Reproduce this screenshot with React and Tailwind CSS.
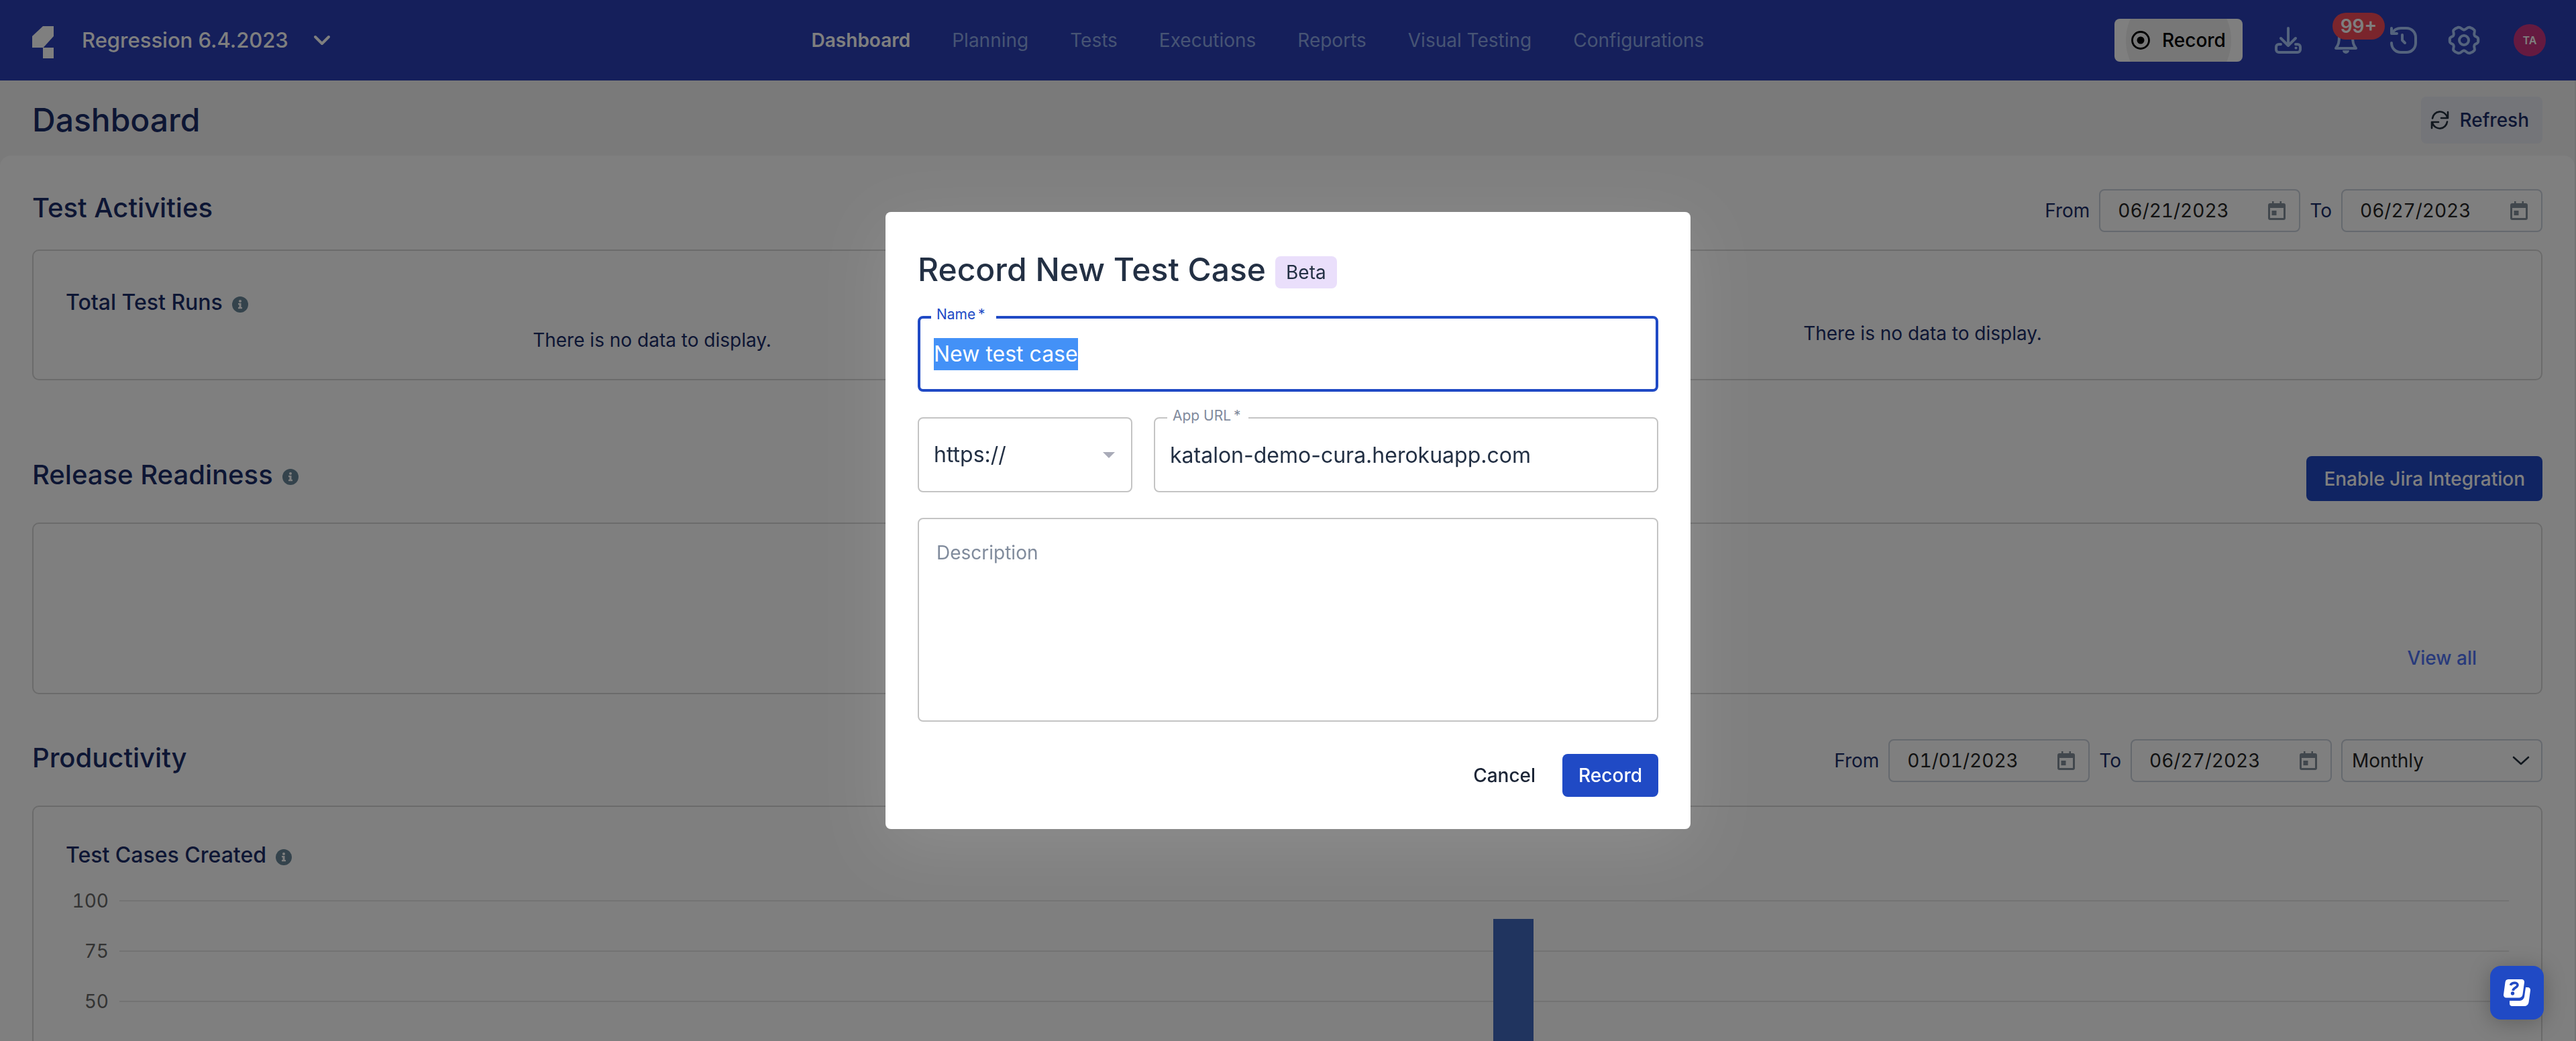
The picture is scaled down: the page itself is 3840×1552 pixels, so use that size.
import { useEffect, useRef } from "react";

const navItems = ["Planning", "Tests", "Executions", "Reports", "Visual Testing", "Configurations"];
const axisTicks = [100, 75, 50, 25, 0];
const bars = [{ label: "May 2023", value: 91, left: 57.5 }];

function InfoIcon() {
  return (
    <svg className="mt-1.5 size-6 shrink-0" viewBox="0 0 24 24" aria-hidden="true">
      <circle cx="12" cy="12" r="12" fill="#688699" />
      <circle cx="12" cy="7" r="2" fill="#fff" />
      <path d="M9 10h4.500v6H15v2.200H9V16h1.500v-3.800H9z" fill="#fff" />
    </svg>
  );
}

function CalendarIcon() {
  return (
    <svg className="h-7 w-[26px]" viewBox="0 0 26 28" aria-hidden="true">
      <path
        d="M6 0h2.500v3h9V0H20v3h3a3 3 0 0 1 3 3v19a3 3 0 0 1-3 3H3a3 3 0 0 1-3-3V6a3 3 0 0 1 3-3h3zM3 10v15h20V10z"
        fill="#828e9b"
        fillRule="evenodd"
      />
      <rect x="5.500" y="14" width="7" height="7" fill="#828e9b" />
    </svg>
  );
}

function DateField({ id, label, value }) {
  return (
    <div className="flex items-center gap-3.5">
      <label htmlFor={id} className="text-[28px] text-[#1a2c68]">
        {label}
      </label>
      <div className="flex h-16 w-[300px] items-center justify-between rounded-lg border-2 border-[#cbd2dc] pr-5 pl-[26px]">
        <input
          id={id}
          defaultValue={value}
          className="w-[200px] bg-transparent text-[28px] text-[#242424] tabular-nums outline-none"
        />
        <button type="button" aria-label={"Choose date, " + value}>
          <CalendarIcon />
        </button>
      </div>
    </div>
  );
}

function SectionTitle({ children, info }) {
  return (
    <h2 className="flex items-center gap-3.5 text-[40px] leading-14 font-medium text-[#1a2c68]">
      {children}
      {info && <InfoIcon />}
    </h2>
  );
}

function PanelTitle({ children }) {
  return (
    <h3 className="flex items-center gap-3.5 text-[32px] leading-10 font-medium text-[#1a2c68]">
      {children}
      <InfoIcon />
    </h3>
  );
}

function GearIcon() {
  const d = "M23 6.500C26.500 6.500 27.500 2 31.500 2.700C34.500 3.500 37 5 38.600 7C40 9.500 37 12 38.600 14.800C40 17.500 44 16.500 44.200 20V22";
  return (
    <svg className="h-11 w-12" viewBox="-1 0 48 44" fill="none" stroke="currentColor" strokeWidth="4" strokeLinecap="round" aria-hidden="true">
      <path d={d} />
      <path d={d} transform="matrix(-1 0 0 1 46 0)" />
      <path d={d} transform="matrix(1 0 0 -1 0 44)" />
      <path d={d} transform="matrix(-1 0 0 -1 46 44)" />
      <circle cx="23" cy="22" r="7" />
    </svg>
  );
}

function Header() {
  return (
    <header className="flex h-[120px] shrink-0 items-center justify-between bg-[#2a3eb6] pr-[45px] pl-12">
      <div className="flex items-center pr-[104px]">
        <svg className="mt-1.5 h-12 w-8" viewBox="0 0 32 48" fill="#fff" aria-label="Katalon" role="img">
          <path d="M16 0h16v15L16.500 32H0V15z" />
          <path d="M16 32h16v16H16z" />
        </svg>
        <button type="button" className="ml-[42px] flex items-center gap-9 text-[31px] font-medium text-white">
          Regression 6.4.2023
          <svg className="h-[18px] w-7" viewBox="0 0 28 18" fill="none" stroke="currentColor" strokeWidth="4" strokeLinecap="round" strokeLinejoin="round" aria-hidden="true">
            <path d="M4 4l10 10L24 4" />
          </svg>
        </button>
      </div>
      <nav className="flex items-center gap-[62px] text-[28px] text-[#8ea9e8]">
        <a href="#dashboard" className="font-semibold text-white">
          Dashboard
        </a>
        {navItems.map((item) => (
          <a key={item} href={"#" + item}>
            {item}
          </a>
        ))}
      </nav>
      <div className="flex items-center gap-[46px] text-[#a9c6fb]">
        <button type="button" className="mr-0.5 flex h-16 w-[191px] items-center justify-center overflow-hidden rounded-lg bg-[radial-gradient(circle_at_center,#efefef_78px,#ffffff_79px)] text-[28px] font-medium text-black">
          <svg className="mr-[18px] size-7" viewBox="0 0 28 28" aria-hidden="true">
            <circle cx="14" cy="14" r="12.500" fill="none" stroke="currentColor" strokeWidth="2.800" />
            <circle cx="14" cy="14" r="5.500" fill="currentColor" />
          </svg>
          Record
        </button>
        <button type="button" aria-label="Downloads">
          <svg className="size-10" viewBox="0 0 40 40" fill="none" stroke="currentColor" strokeWidth="4" strokeLinecap="round" strokeLinejoin="round" aria-hidden="true">
            <path d="M20 2v25M9 17l11 11 11-11" />
            <path d="M9 26H6a4 4 0 0 0-4 4v4a4 4 0 0 0 4 4h28a4 4 0 0 0 4-4v-4a4 4 0 0 0-4-4h-3" />
            <circle cx="31.500" cy="31.500" r="2" fill="currentColor" stroke="none" />
          </svg>
        </button>
        <button type="button" aria-label="Notifications, 99+" className="relative">
          <svg className="size-10" viewBox="0 0 40 40" fill="none" stroke="currentColor" strokeWidth="4" strokeLinejoin="round" aria-hidden="true">
            <path d="M20 4a10 10 0 0 0-10 10c0 9-1 13-5 18h30c-4-5-5-9-5-18A10 10 0 0 0 20 4z" />
            <path d="M15 35h10a5 5 0 0 1-10 0z" fill="currentColor" stroke="none" />
          </svg>
          <span className="absolute -top-[21px] left-0 flex h-10 w-[78px] items-center justify-center rounded-full bg-[#f44a58] text-[28px] font-semibold text-white">
            99+
          </span>
        </button>
        <button type="button" aria-label="History">
          <svg className="size-10" viewBox="0 0 40 40" fill="none" stroke="currentColor" strokeWidth="4" strokeLinecap="round" strokeLinejoin="round" aria-hidden="true">
            <path d="M3 9C6 4 11 2 16 2h8c8 0 14 6 14 14v8c0 8-6 14-14 14h-8C8 38 2 32 2 24" />
            <path d="M2 2v8h8M18 12v8l4 4" />
          </svg>
        </button>
        <button type="button" aria-label="Settings">
          <GearIcon />
        </button>
        <button type="button" className="ml-1 size-12 rounded-full bg-[#ca3580] text-[16px] font-semibold text-white">
          TA
        </button>
      </div>
    </header>
  );
}

function Dashboard() {
  return (
    <div className="flex h-screen flex-col overflow-hidden bg-white">
      <Header />
      <main className="grow border-r-2 border-[#e6e6e6] bg-[#f4f4f4]">
        <div className="flex h-28 items-center justify-between px-12 pt-1.5">
          <h1 className="text-[48px] leading-14 font-medium text-[#1a2c68]">Dashboard</h1>
          <button type="button" className="flex h-[70px] items-center gap-4 rounded-lg bg-[#e8eaf2] pr-5 pl-3.5 text-[28px] font-medium text-[#1a2c68]">
            <svg className="size-7" viewBox="0 0 28 28" fill="none" stroke="#222f3c" strokeWidth="2.600" strokeLinecap="round" strokeLinejoin="round" aria-hidden="true">
              <path d="M3 11.500A11.300 11.300 0 0 1 25 9.500L26 11M26 2v9h-10" />
              <path d="M25 16.500A11.300 11.300 0 0 1 3 18.500L2 17M2 26v-9h10" />
            </svg>
            Refresh
          </button>
        </div>

        <div className="rounded-t-2xl bg-white px-12 pt-[50px]">
          <section>
            <div className="flex items-start justify-between">
              <SectionTitle>Test Activities</SectionTitle>
              <div className="flex gap-3.5">
                <DateField id="activity-from" label="From" value="06/21/2023" />
                <DateField id="activity-to" label="To" value="06/27/2023" />
              </div>
            </div>
            <div className="mt-[26px] grid grid-cols-2 gap-[146px] rounded-[10px] border-2 border-[#d6d6d6] px-12 pt-[57px] pb-[38px] text-[28px] leading-10 text-[#1a2c68]">
              <div>
                <PanelTitle>Total Test Runs</PanelTitle>
                <p className="mt-4 text-center">There is no data to display.</p>
              </div>
              <p className="pt-[46px] text-center">There is no data to display.</p>
            </div>
          </section>

          <section className="mt-[113px]">
            <div className="flex items-start justify-between">
              <SectionTitle info>Release Readiness</SectionTitle>
              <button type="button" className="h-[67px] rounded-lg bg-[#2048c4] px-[26px] text-[28px] font-medium text-white">
                Enable Jira Integration
              </button>
            </div>
            <div className="mt-8 flex h-64 items-end justify-end rounded-[10px] border-2 border-[#d6d6d6] pr-24 pb-8">
              <a href="#releases" className="text-[28px] leading-10 font-medium text-[#5074f6]">
                View all
              </a>
            </div>
          </section>

          <section className="mt-[67px]">
            <div className="flex items-start justify-between">
              <SectionTitle>Productivity</SectionTitle>
              <div className="flex gap-3.5">
                <DateField id="productivity-from" label="From" value="01/01/2023" />
                <DateField id="productivity-to" label="To" value="06/27/2023" />
                <div className="relative flex items-center">
                  <select aria-label="Period" className="h-16 w-[300px] appearance-none rounded-lg border-2 border-[#cbd2dc] bg-transparent pl-3.5 text-[28px] text-[#242424]">
                    <option>Monthly</option>
                  </select>
                  <svg className="pointer-events-none absolute right-[18px] h-4 w-7" viewBox="0 0 28 16" fill="none" stroke="#222f3c" strokeWidth="2.600" strokeLinecap="round" strokeLinejoin="round" aria-hidden="true">
                    <path d="M3 3l11 10L25 3" />
                  </svg>
                </div>
              </div>
            </div>
            <div className="mt-[35px] rounded-[10px] border-2 border-[#d6d6d6] px-12 pt-[52px]">
              <PanelTitle>Test Cases Created</PanelTitle>
              <div className="relative mt-2.5">
                {axisTicks.map((tick) => (
                  <div key={tick} className="flex h-[75px] items-center gap-4">
                    <span className="w-16 text-right text-[28px] leading-none text-[#666666] tabular-nums">{tick}</span>
                    <span className="h-0.5 grow bg-[#e6e6e6]" />
                  </div>
                ))}
                <div className="absolute top-[38px] right-0 bottom-[37px] left-20">
                  {bars.map((bar) => (
                    <div
                      key={bar.label}
                      title={bar.label}
                      className="absolute bottom-0 w-[60px] bg-[#4068be]"
                      style={{ left: bar.left + "%", height: bar.value + "%" }}
                    />
                  ))}
                </div>
              </div>
            </div>
          </section>
        </div>
      </main>
    </div>
  );
}

function RecordDialog() {
  const nameRef = useRef(null);

  useEffect(() => {
    nameRef.current.focus();
    nameRef.current.select();
  }, []);

  return (
    <div className="fixed inset-0 flex items-center justify-center bg-black/50">
      <form
        role="dialog"
        aria-labelledby="dialog-title"
        className="flex w-[1200px] flex-col rounded-lg bg-white p-12 text-[#233044] shadow-[0_24px_100px_rgba(255,255,255,0.11)]"
      >
        <div className="flex items-end gap-3.5 pt-2.5">
          <h2 id="dialog-title" className="text-[48px] leading-14 font-medium">
            Record New Test Case
          </h2>
          <span className="flex h-12 items-center rounded-lg bg-[#eadffb] px-4 text-[28px]">Beta</span>
        </div>

        <div className="relative mt-[41px] flex">
          <textarea
            id="case-name"
            ref={nameRef}
            rows={1}
            defaultValue="New test case"
            className="h-[113px] w-full resize-none overflow-hidden rounded-lg border-4 border-[#204ac5] px-5 py-[29px] text-[32px] leading-12 outline-none selection:bg-[#4391f7] selection:text-white"
          />
          <label htmlFor="case-name" className="absolute -top-[18px] left-5 bg-white pr-4 pl-2 text-[21px] leading-8 text-[#204ac5]">
            {"Name\u2009*"}
          </label>
        </div>

        <div className="mt-[38px] flex gap-8">
          <div className="relative flex items-center">
            <select aria-label="Protocol" className="h-[112px] w-80 appearance-none rounded-lg border-2 border-[#c4c4c4] bg-white pl-[22px] text-[32px]">
              <option>https://</option>
            </select>
            <svg className="pointer-events-none absolute right-[26px] h-[9px] w-[18px]" viewBox="0 0 18 9" fill="#a9abb8" aria-hidden="true">
              <path d="M0 0h18L9 9z" />
            </svg>
          </div>
          <div className="relative grow">
            <input
              id="app-url"
              defaultValue="katalon-demo-cura.herokuapp.com"
              className="h-[112px] w-full rounded-lg border-2 border-[#c4c4c4] px-[22px] text-[32px] outline-none"
            />
            <label htmlFor="app-url" className="absolute -top-[18px] left-5 bg-white pr-3 pl-2 text-[21px] leading-8 text-[#7f8a9c]">
              {"App URL\u2009*"}
            </label>
          </div>
        </div>

        <textarea
          aria-label="Description"
          placeholder="Description"
          className="mt-[38px] h-[304px] w-full resize-none rounded-lg border-2 border-[#c4c4c4] px-[26px] py-7 text-[28px] leading-11 outline-none placeholder:text-[#808b9c]"
        />

        <div className="mt-12 flex justify-end gap-4 text-[28px] font-medium">
          <button type="button" className="h-16 px-6 text-[#1c2536]">
            Cancel
          </button>
          <button type="button" className="h-16 rounded-lg bg-[#204ac5] px-6 text-white">
            Record
          </button>
        </div>
      </form>
    </div>
  );
}

export default function App() {
  return (
    <div className="font-['Inter',sans-serif]">
      <Dashboard />
      <RecordDialog />
      <button
        type="button"
        aria-label="Help"
        className="fixed right-12 bottom-8 flex size-20 items-center justify-center rounded-2xl bg-[#204ac5] shadow-[0_4px_32px_rgba(0,0,0,0.25)]"
      >
        <svg className="size-10" viewBox="0 0 40 40" aria-hidden="true">
          <path d="M7 0h20a4 4 0 0 1 4 4.500l-2.500 18a6 6 0 0 1-6 5H4a4 4 0 0 1-4-4.500L2.500 4.500A5 5 0 0 1 7 0z" fill="#fff" />
          <path d="M33 12h3a4 4 0 0 1 4 4.500l-2.500 18a6.500 6.500 0 0 1-6.500 5.500H13a4 4 0 0 1-4-4v-4h15a7 7 0 0 0 7-6z" fill="#fff" />
          <path d="M10.500 9c1-4.500 10.500-5 10.500-.500c0 4-6.500 4-7 8.500" fill="none" stroke="#204ac5" strokeWidth="3.600" />
          <circle cx="13.500" cy="21" r="2.700" fill="#204ac5" />
        </svg>
      </button>
    </div>
  );
}
